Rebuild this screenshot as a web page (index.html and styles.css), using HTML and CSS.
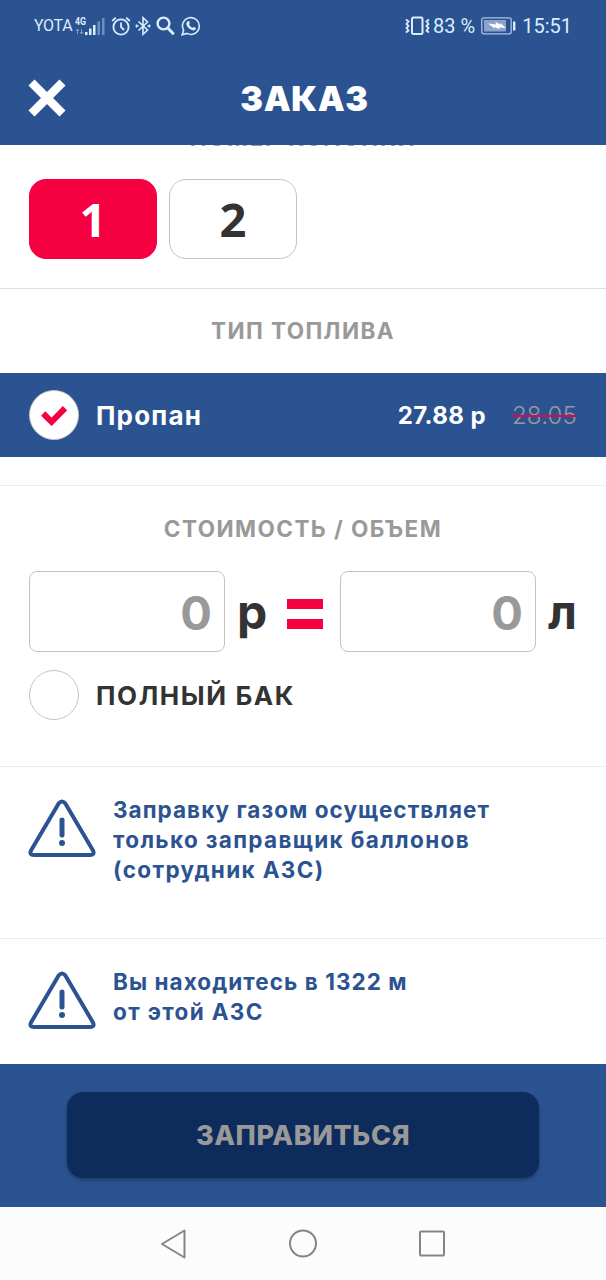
FILE: index.html
```html
<!DOCTYPE html>
<html lang="ru">
<head>
    <meta charset="UTF-8">
    <meta name="viewport" content="width=device-width, initial-scale=1.0">
    <title>Заказ</title>
    <link rel="stylesheet" href="styles.css">
</head>
<body>
    <div class="status-bar">
        <div class="status-left">
            <span class="carrier">YOTA</span>
            <svg class="signal" width="31" height="20" viewBox="0 0 31 20">
                <text class="network" x="0" y="8.5" textLength="11" lengthAdjust="spacingAndGlyphs">4G</text>
                <path d="M2.5 18v-5M1 15l1.5-2L4 15M6.500 13v5M5 16l1.500 2L8 16" fill="none" stroke="#7f9ac4" stroke-width="1"/>
                <path d="M10 16h2.500v3H10zM14 12.500h2.500V19H14zM18 9h2.500v10H18z" fill="#d9edff"/>
                <path d="M22.500 5.500H25V19h-2.500zM27 2h2.500v17H27z" fill="#6f8ebc"/>
            </svg>
            <svg class="alarm" width="20" height="20" viewBox="0 0 20 20" fill="none" stroke="#d9edff" stroke-width="1.800">
                <circle cx="10" cy="11" r="7.600"/>
                <path d="M10 6.500V11l3 3M1.200 5l3.600-3.300M18.800 5l-3.600-3.300"/>
            </svg>
            <svg class="bluetooth" width="16" height="20" viewBox="0 0 16 20" fill="none" stroke="#d9edff" stroke-width="1.600">
                <path d="M3.500 5.500l9 8.500L8 18.300V1.700L12.500 6l-9 8.500M0.800 8.800L2.600 10l-1.800 1.200M15.200 8.800L13.400 10l1.800 1.200"/>
            </svg>
            <svg class="search" width="19" height="20" viewBox="0 0 19 20" fill="none" stroke="#d9edff">
                <circle cx="7.500" cy="7.500" r="5.900" stroke-width="2.400"/>
                <path d="M11.800 12l6 6.300" stroke-width="3"/>
            </svg>
            <svg class="whatsapp" width="20" height="20" viewBox="0 0 20 20">
                <path d="M1.200 18.800l1.400-4.600a8.400 8.400 0 1 1 3.300 3.200z" fill="none" stroke="#d9edff" stroke-width="1.600"/>
                <path d="M6.700 5.300c.6-.5 1.300-.3 1.500.3l.6 1.500c.1.400-.7 1.100-.7 1.400.7 1.500 1.900 2.600 3.400 3.300.4 0 1-1 1.400-.9l1.600.8c.5.300.5.700.2 1.300-.6 1.300-2 1.700-3.300 1.300-3.100-1-5.100-3-6-5.700-.3-1.300.3-2.600 1.300-3.300z" fill="#d9edff"/>
            </svg>
        </div>
        <div class="status-right">
            <svg class="vibrate" width="25" height="20" viewBox="0 0 25 20" fill="none" stroke="#d9edff">
                <rect x="7" y="1.500" width="10.500" height="16.500" rx="1.500" stroke-width="2"/>
                <path d="M1 3.500l2.500 2L1.500 8l2 2-2 2 2 2.500L1 16.500M24 3.500l-2.500 2 2 2.500-2 2 2 2-2 2.500 2.500 2" stroke-width="1.800"/>
            </svg>
            <span class="percent">83 %</span>
            <svg class="battery" width="35" height="18" viewBox="0 0 35 18">
                <rect x="0.800" y="0.800" width="29.400" height="16" rx="2" fill="none" stroke="#a9c2e6" stroke-width="1.300"/>
                <path d="M3 3h22v11.500H3z" fill="#8aa2cc"/>
                <path d="M7 6.500l8 1-.5-2.700 5 3-.5-2L25 11l-7-.6.600 2.100-5-2.700.500 2z" fill="#fff"/>
                <path d="M32 4.500h2.400v9H32z" fill="#d9edff"/>
            </svg>
            <span class="time">15:51</span>
        </div>
    </div>

    <header class="header">
        <button class="close" type="button" aria-label="Закрыть">
            <svg width="38" height="38" viewBox="0 0 38 38">
                <path d="M3.500 3.500l31 31M34.500 3.500l-31 31" stroke="#fff" stroke-width="8.500"/>
            </svg>
        </button>
        <h1>ЗАКАЗ</h1>
    </header>

    <main class="content">
        <!-- Pump number -->
        <section class="pumps">
            <h2 class="pumps-title">НОМЕР КОЛОНКИ</h2>
            <div class="pump-list">
                <button class="pump active" type="button">1</button>
                <button class="pump" type="button">2</button>
            </div>
        </section>

        <!-- Fuel type -->
        <section class="fuel">
            <h2 class="fuel-title">ТИП ТОПЛИВА</h2>
            <div class="fuel-row">
                <span class="check">
                    <svg width="26" height="21" viewBox="0 0 26 21">
                        <path d="M2.200 8.500L10.600 16.800 24 3.200" fill="none" stroke="#f50041" stroke-width="6"/>
                    </svg>
                </span>
                <span class="fuel-name">Пропан</span>
                <span class="price">27.88 р</span>
                <span class="old-price">28.05</span>
            </div>
        </section>

        <!-- Cost and volume -->
        <section class="amount">
            <h2 class="amount-title">СТОИМОСТЬ / ОБЪЕМ</h2>
            <div class="amount-row">
                <div class="field">0</div>
                <span class="unit">р</span>
                <span class="equals"></span>
                <div class="field">0</div>
                <span class="unit">л</span>
            </div>
            <div class="full-tank">
                <span class="check"></span>
                <span class="full-tank-label">ПОЛНЫЙ БАК</span>
            </div>
        </section>

        <section class="notice notice-gas">
            <svg class="warning" width="68" height="60" viewBox="0 0 68 60">
                <path d="M30.800 4.300Q34 .5 37.200 4.300L65 51.500Q67 56 62 56H6Q1 56 3 51.500z" fill="none" stroke="#2c5391" stroke-width="4" stroke-linejoin="round"/>
                <path d="M34 21v15" stroke="#2c5391" stroke-width="5" stroke-linecap="round"/>
                <circle cx="34" cy="44" r="3" fill="#2c5391"/>
            </svg>
            <p>Заправку газом осуществляет<br><span class="wide">только заправщик баллонов<br>(сотрудник АЗС)</span></p>
        </section>

        <section class="notice">
            <svg class="warning" width="68" height="60" viewBox="0 0 68 60">
                <path d="M30.800 4.300Q34 .5 37.200 4.300L65 51.500Q67 56 62 56H6Q1 56 3 51.500z" fill="none" stroke="#2c5391" stroke-width="4" stroke-linejoin="round"/>
                <path d="M34 21v15" stroke="#2c5391" stroke-width="5" stroke-linecap="round"/>
                <circle cx="34" cy="44" r="3" fill="#2c5391"/>
            </svg>
            <p>Вы находитесь в 1322 м<br><span class="wide">от этой АЗС</span></p>
        </section>
    </main>

    <footer class="footer">
        <button class="submit" type="button">ЗАПРАВИТЬСЯ</button>
    </footer>

    <nav class="nav-bar">
        <svg width="28" height="30" viewBox="0 0 28 30" fill="none" stroke="#858585" stroke-width="2" stroke-linejoin="round">
            <path d="M2 15L24.500 1.500v27z"/>
        </svg>
        <svg width="28" height="30" viewBox="0 0 28 30" fill="none" stroke="#858585" stroke-width="2">
            <circle cx="14" cy="14.500" r="13"/>
        </svg>
        <svg width="28" height="30" viewBox="0 0 28 30" fill="none" stroke="#858585" stroke-width="2">
            <rect x="2" y="2.500" width="24" height="24" rx="1"/>
        </svg>
    </nav>
</body>
</html>
```

FILE: styles.css
```css
* {
    margin: 0;
    padding: 0;
    box-sizing: border-box;
}

body {
    width: 606px;
    height: 1280px;
    display: flex;
    flex-direction: column;
    overflow: hidden;
    background: #fff;
    color: #333;
    font-family: 'Inter', 'Open Sans', sans-serif;
    font-weight: 700;
    white-space: nowrap;
}

svg {
    display: block;
    flex-shrink: 0;
}

button {
    border: none;
    font-family: inherit;
    cursor: pointer;
}

/* Status bar */
.status-bar {
    height: 51px;
    display: flex;
    justify-content: space-between;
    padding: 0 34px;
    background: #2c5391;
    color: #d9edff;
    font-family: 'Roboto', sans-serif;
    font-weight: 400;
}

.status-left, .status-right {
    display: flex;
    align-items: center;
}

.carrier {
    width: 41px;
    font-size: 16px;
    letter-spacing: -0.3px;
}

.network {
    font-size: 10px;
    font-weight: 700;
    fill: #d9edff;
}

.alarm {
    margin-left: 5px;
}

.bluetooth {
    margin-left: 4px;
}

.search {
    margin-left: 5px;
}

.whatsapp {
    margin-left: 6px;
}

.percent {
    margin-left: 3px;
    font-size: 20px;
}

.battery {
    margin: 0 6px 0 6px;
}

.time {
    font-size: 20px;
}

/* Header */
.header {
    height: 94px;
    display: grid;
    grid-template-columns: 38px 1fr 38px;
    align-items: center;
    padding: 0 28px;
    background: #2c5391;
    color: #fff;
}

.close {
    background: none;
}

h1 {
    padding: 2px 0 0 3px;
    text-align: center;
    font-size: 34px;
    font-weight: 900;
    line-height: 40px;
    letter-spacing: 0.6px;
}

/* Content */
.content {
    height: 919px;
    overflow: hidden;
}

h2 {
    text-align: center;
    color: #999;
    font-size: 22.5px;
    line-height: 28px;
}

.pumps {
    display: flow-root;
    height: 144px;
    border-bottom: 1px solid #ddd;
}

/* scrolled under the header */
.pumps-title {
    margin-top: -21px;
    letter-spacing: 1.6px;
}

.pump-list {
    display: flex;
    gap: 12px;
    padding: 27px 29px 0;
}

.pump {
    width: 128px;
    height: 80px;
    border: 1px solid #c4c4c4;
    border-radius: 17px;
    background: #fff;
    color: #333;
    font-family: 'Open Sans', sans-serif;
    font-size: 47px;
    font-weight: 700;
    line-height: 76px;
}

.pump.active {
    background: #f50041;
    border-color: #f50041;
    color: #fff;
}

.fuel {
    height: 197px;
    border-bottom: 1px solid #eee;
}

.fuel-title {
    padding: 28px 0;
    letter-spacing: 1.4px;
}

.fuel-row {
    height: 84px;
    display: flex;
    align-items: center;
    padding: 0 29px 0 29px;
    background: #2c5391;
    color: #fff;
}

.check {
    width: 50px;
    height: 50px;
    flex-shrink: 0;
    display: flex;
    align-items: center;
    justify-content: center;
    border: 1px solid #c4c4c4;
    border-radius: 50%;
    background: #fff;
}

.fuel-name {
    margin-left: 17px;
    font-size: 26px;
    letter-spacing: 1.2px;
}

.price {
    margin-left: auto;
    font-size: 24px;
    letter-spacing: 0.4px;
}

.old-price {
    margin-left: 26px;
    color: #999;
    font-size: 24px;
    font-weight: 300;
    letter-spacing: 0.2px;
    text-decoration: line-through #d50a50 2px;
}

.amount {
    height: 281px;
    padding: 29px 29px 0;
    border-bottom: 1px solid #eee;
}

.amount-title {
    letter-spacing: 1.45px;
}

.amount-row {
    display: flex;
    align-items: center;
    margin-top: 28px;
}

.field {
    width: 196px;
    height: 81px;
    flex-shrink: 0;
    padding-right: 12px;
    border: 1px solid #c4c4c4;
    border-radius: 8px;
    color: #999;
    font-size: 47px;
    line-height: 82px;
    text-align: right;
}

.unit {
    width: 34px;
    flex-shrink: 0;
    margin-left: 12px;
    font-size: 48px;
    line-height: 80px;
}

.equals {
    width: 36px;
    height: 30px;
    flex-shrink: 0;
    margin: 4px 17px 0 16px;
    border: solid #f50041;
    border-width: 10px 0;
}

.full-tank {
    display: flex;
    align-items: center;
    margin-top: 18px;
}

.full-tank-label {
    margin-left: 17px;
    font-size: 26px;
    letter-spacing: 1.6px;
}

.notice {
    display: flex;
    gap: 17px;
    padding: 28px 28px 0;
    color: #2c5391;
    font-size: 22.5px;
    line-height: 30px;
    letter-spacing: 1.05px;
}

.notice-gas {
    height: 172px;
    border-bottom: 1px solid #eee;
}

.wide {
    letter-spacing: 1.35px;
}

.warning {
    margin-top: 4px;
}

/* Footer */
.footer {
    height: 143px;
    padding-top: 28px;
    background: #2c5391;
}

.submit {
    display: block;
    width: 472px;
    height: 86px;
    margin: 0 auto;
    border-radius: 16px;
    background: #0d2c5c;
    color: #999;
    font-size: 27px;
    font-weight: 800;
    letter-spacing: 0.6px;
    box-shadow: 0 2px 4px rgba(0, 0, 0, 0.3);
}

.nav-bar {
    height: 73px;
    display: flex;
    justify-content: center;
    align-items: center;
    gap: 101px;
    background: #fcfcfc;
}
```
